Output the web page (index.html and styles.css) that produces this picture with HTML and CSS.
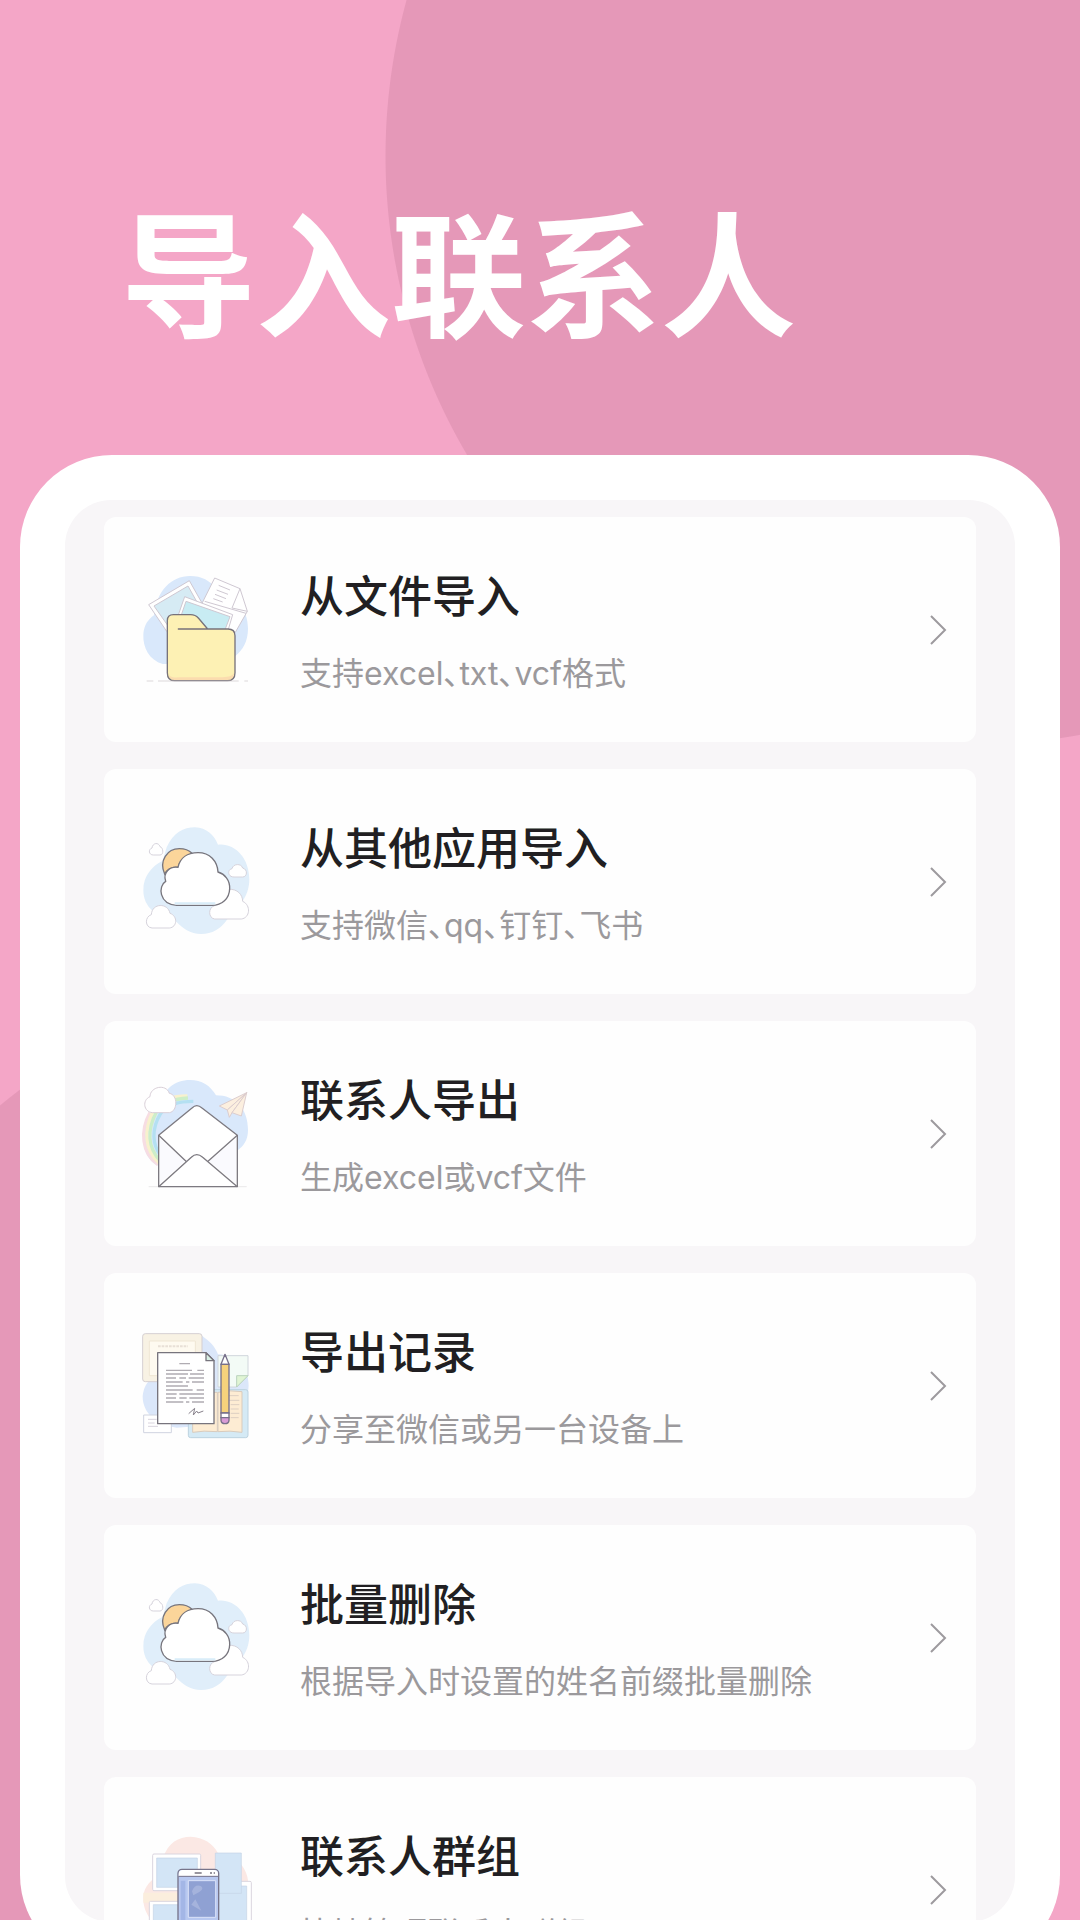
FILE: index.html
```html
<!DOCTYPE html>
<html lang="zh-CN">
<head>
    <meta charset="UTF-8">
    <meta name="viewport" content="width=device-width, initial-scale=1.0">
    <title>导入联系人</title>
    <link rel="stylesheet" href="styles.css">
</head>
<body>
    <!-- Shared icons -->
    <svg class="sprite" aria-hidden="true">
        <symbol id="icon-cloud" viewBox="0 4 420 420">
            <path d="M110 110C130 66 160 50 195 50C230 52 252 72 264 102C312 96 358 140 358 206C358 262 322 290 292 326C272 356 246 370 214 370C180 370 158 352 136 330C80 320 40 290 40 238C40 196 66 166 98 150Z" fill="#e0eefa"/>
            <g fill="#fff" stroke="#d6d3dc" stroke-width="3">
                <path d="M70 133C56 133 54 116 66 112C68 96 86 94 90 108C100 110 102 133 90 133Z"/>
                <path d="M312 199C292 199 292 176 306 174C310 158 334 158 338 172C354 176 352 199 338 199Z"/>
                <path d="M254 325C234 322 234 290 254 285C258 258 270 240 296 236C322 234 338 252 338 272C364 284 360 322 334 325Z"/>
                <path d="M66 352C44 350 44 318 64 312C66 276 114 276 120 308C144 316 142 350 118 352Z"/>
            </g>
            <path d="M104 190C86 150 112 114 148 114C164 114 178 120 186 128L180 140C160 142 148 152 144 170C126 168 112 176 104 190Z" fill="#fbd59a" stroke="#77757d" stroke-width="4"/>
            <path d="M140 284C86 280 84 226 107 212C98 186 120 166 144 170C150 142 172 126 204 126C240 126 262 152 264 184C284 190 300 208 299 234C298 264 276 284 246 284Z" fill="#fff" stroke="#77757d" stroke-width="4"/>
            <path d="M134 278H256" stroke="#d9edf9" stroke-width="7"/>
        </symbol>
        <symbol id="icon-arrow" viewBox="0 0 18 32">
            <path d="M2 2L16 16L2 30" fill="none" stroke="#9d9a9e" stroke-width="2"/>
        </symbol>
    </svg>

    <div class="page">
        <header class="header">
            <h1>导入联系人</h1>
        </header>

        <main class="phone">
            <ul class="menu">
                <li>
                    <a class="card" href="#import-file">
                        <svg class="icon" viewBox="0 -2 420 420" aria-hidden="true">
                            <path d="M98 310C58 298 38 262 40 220C42 194 54 176 72 164C80 90 124 46 180 46C216 46 240 60 258 84C316 100 354 144 354 204C354 242 338 268 316 286L300 310Z" fill="#d9e8fb"/>
                            <g stroke="#cfc8d2" stroke-width="3" stroke-linejoin="round">
                                <path d="M254 52L330 84L352 152L316 215L200 160Z" fill="#fff"/>
                                <path d="M330 84L306 142L352 152M224 122L348 158" fill="none"/>
                                <path d="M266 74L300 88M260 88L294 101M255 101L288 114M250 114L278 124" fill="none"/>
                                <path d="M56 132L178 60L246 180L110 212Z" fill="#fff"/>
                                <path d="M72 136L174 76L230 176L120 204Z" fill="#d6ebf4"/>
                                <path d="M164 108L308 162L288 230L130 206Z" fill="#fff"/>
                                <path d="M168 122L300 168L280 220L142 198Z" fill="#c8ecf3"/>
                            </g>
                            <path d="M112 180C112 168 118 162 130 162H182C192 162 198 164 205 172L233 205H294C308 205 315 213 315 225V336C315 352 306 360 292 360H134C120 360 112 351 112 336Z" fill="#fdf1b4"/>
                            <path d="M116 342C126 354 140 350 160 350H270C292 350 304 348 312 338C312 354 304 358 292 358H134C124 358 118 352 116 342Z" fill="#fbdcae"/>
                            <path d="M112 180C112 168 118 162 130 162H182C192 162 198 164 205 172L233 205H294C308 205 315 213 315 225V336C315 352 306 360 292 360H134C120 360 112 351 112 336ZM145 205H236" fill="none" stroke="#77727a" stroke-width="4" stroke-linecap="round"/>
                            <path d="M50 361H70M84 361H104M104 361H326M343 361H354" stroke="#cbc6c9" stroke-width="2"/>
                        </svg>
                        <span class="text">
                            <span class="name">从文件导入</span>
                            <span class="desc">支持excel、txt、vcf格式</span>
                        </span>
                        <svg class="arrow" aria-hidden="true"><use href="#icon-arrow"/></svg>
                    </a>
                </li>
                <li>
                    <a class="card" href="#import-app">
                        <svg class="icon" aria-hidden="true"><use href="#icon-cloud"/></svg>
                        <span class="text">
                            <span class="name">从其他应用导入</span>
                            <span class="desc">支持微信、qq、钉钉、飞书</span>
                        </span>
                        <svg class="arrow" aria-hidden="true"><use href="#icon-arrow"/></svg>
                    </a>
                </li>
                <li>
                    <a class="card" href="#export">
                        <svg class="icon" viewBox="0 -4 420 420" aria-hidden="true">
                            <path d="M80 300C50 280 38 250 40 214C42 176 60 156 84 140C96 70 134 44 180 44C216 44 240 60 258 90C316 90 354 130 354 194C354 226 340 242 322 256L300 310Z" fill="#d9e8fb"/>
                            <g fill="none" stroke-width="10">
                                <path d="M84 298C34 262 30 196 60 142" stroke="#f7dde3"/>
                                <path d="M88 294C44 254 40 196 70 136C94 100 130 92 172 92" stroke="#f8f1cd"/>
                                <path d="M90 286C54 248 50 196 80 138C104 108 140 100 174 98" stroke="#cdeec8"/>
                                <path d="M92 270C66 238 64 190 92 144C116 116 146 108 190 108" stroke="#b4e0f2"/>
                            </g>
                            <path d="M68 142C40 140 36 104 60 94C60 64 108 54 118 84C144 88 144 138 118 142Z" fill="#fff" stroke="#d9cfd8" stroke-width="3"/>
                            <g fill="#fcefdf" stroke="#dccdce" stroke-width="3" stroke-linejoin="round">
                                <path d="M350 82L268 122L292 134Z"/>
                                <path d="M350 82L292 134L298 156L306 142Z"/>
                                <path d="M350 82L306 142L334 152Z"/>
                            </g>
                            <path d="M56 364H350" stroke="#e0dcde" stroke-width="2"/>
                            <path d="M86 210L186 128Q200 114 216 128L322 210V364H86Z" fill="#fff" stroke="#7d7a81" stroke-width="4" stroke-linejoin="round"/>
                            <path d="M90 220L164 288L90 354ZM318 220L238 288L318 354Z" fill="#fafafe"/>
                            <path d="M86 210L168 288M322 210L234 288M86 364L184 276Q200 260 218 276L322 364" fill="none" stroke="#7d7a81" stroke-width="4"/>
                        </svg>
                        <span class="text">
                            <span class="name">联系人导出</span>
                            <span class="desc">生成excel或vcf文件</span>
                        </span>
                        <svg class="arrow" aria-hidden="true"><use href="#icon-arrow"/></svg>
                    </a>
                </li>
                <li>
                    <a class="card" href="#history">
                        <svg class="icon" viewBox="0 -13 420 420" aria-hidden="true">
                            <path d="M216 46C240 64 254 76 264 102C322 106 356 140 356 196C354 250 330 290 300 310L140 322C80 314 38 280 38 228C40 206 48 190 60 180Z" fill="#dbe7fa"/>
                            <rect x="38" y="40" width="178" height="144" rx="8" fill="#f8f2e4" stroke="#d5cfd2" stroke-width="3"/>
                            <path d="M58 62H196V166H58Z" fill="#fefaf0" stroke="#efe6d4" stroke-width="3"/>
                            <path d="M84 78H174" stroke="#e8e0d6" stroke-width="6" stroke-dasharray="8 3"/>
                            <path d="M264 106H354V166L320 200H264Z" fill="#f3fbf6" stroke="#d0d6dc" stroke-width="3"/>
                            <path d="M354 166H320V200Z" fill="#e0f5d4" stroke="#b9d2bd" stroke-width="3"/>
                            <path d="M41 284H124V337H41Z" fill="#fff" stroke="#d0d4e0" stroke-width="3"/>
                            <path d="M54 297H80M54 308H74M54 318H84" stroke="#d9d4de" stroke-width="3"/>
                            <rect x="175" y="208" width="179" height="144" rx="7" fill="#d5eaf5" stroke="#bcd2df" stroke-width="3"/>
                            <path d="M188 216H262V334Q220 330 188 336ZM264 216Q300 208 336 214V336Q300 330 264 334Z" fill="#fdecd3" stroke="#d8cbbd" stroke-width="3"/>
                            <path d="M296 226H326M296 240H328M302 253H328M302 266H326M302 279H328M302 292H326" stroke="#ddcfc2" stroke-width="3"/>
                            <path d="M83 97H228L252 121V310H83Z" fill="#fff" stroke="#77747d" stroke-width="4" stroke-linejoin="round"/>
                            <path d="M228 97V121H252Z" fill="#d9f0e5" stroke="#77747d" stroke-width="4" stroke-linejoin="round"/>
                            <path d="M148 130H180M108 150H186M202 150H222M108 161H174M180 161H222M108 173H138M148 173H168M176 173H222M108 185H158M168 185H178M186 185H222M108 197H174M108 209H188M200 209H222M108 221H140M148 221H222M108 233H138M148 233H170M178 233H222M108 245H160M168 245H178M186 245H222" stroke="#b0acb2" stroke-width="4"/>
                            <path d="M176 280L194 264L190 284L200 272L204 278L220 272" fill="none" stroke="#87818b" stroke-width="3"/>
                            <path d="M273 132L285 102L297 132Z" fill="#fff" stroke="#77708a" stroke-width="4" stroke-linejoin="round"/>
                            <path d="M273 132H297V278H273Z" fill="#f6d27c" stroke="#77708a" stroke-width="4"/>
                            <path d="M273 278H297V292H273Z" fill="#fff" stroke="#77708a" stroke-width="4"/>
                            <path d="M273 292H297V300Q296 310 285 310Q274 310 273 300Z" fill="#d99bd6" stroke="#77708a" stroke-width="4"/>
                        </svg>
                        <span class="text">
                            <span class="name">导出记录</span>
                            <span class="desc">分享至微信或另一台设备上</span>
                        </span>
                        <svg class="arrow" aria-hidden="true"><use href="#icon-arrow"/></svg>
                    </a>
                </li>
                <li>
                    <a class="card" href="#delete">
                        <svg class="icon" aria-hidden="true"><use href="#icon-cloud"/></svg>
                        <span class="text">
                            <span class="name">批量删除</span>
                            <span class="desc">根据导入时设置的姓名前缀批量删除</span>
                        </span>
                        <svg class="arrow" aria-hidden="true"><use href="#icon-arrow"/></svg>
                    </a>
                </li>
                <li>
                    <a class="card" href="#groups">
                        <svg class="icon" viewBox="0 -2 420 420" aria-hidden="true">
                            <path d="M100 110C114 66 146 48 182 48C220 50 250 68 264 98C320 104 356 140 356 200C354 260 320 320 240 340H120C60 310 38 270 40 228C42 196 66 176 90 160Z" fill="#fbe8e4"/>
                            <path d="M40 216H150V246H40Z" fill="#fbeedd"/>
                            <g fill="#fff" stroke="#dad5df" stroke-width="3">
                                <rect x="68" y="100" width="144" height="110" rx="4"/>
                                <rect x="58" y="242" width="150" height="110" rx="4"/>
                                <rect x="230" y="182" width="134" height="160" rx="4"/>
                            </g>
                            <g fill="#d3e5f6" stroke="#c6d3e6" stroke-width="2">
                                <path d="M80 112H202V200H80Z"/>
                                <path d="M70 252H196V342H70Z"/>
                                <path d="M240 196H350V326H240Z"/>
                                <path d="M256 97H334V218H256Z"/>
                            </g>
                            <rect x="144" y="146" width="122" height="220" rx="12" fill="#b8c8f0" stroke="#77748a" stroke-width="4"/>
                            <path d="M146 166V160Q146 148 158 148H252Q264 148 264 160V166Z" fill="#fff"/>
                            <path d="M146 167H264" stroke="#77748a" stroke-width="3"/>
                            <path d="M194 157H215M240 157H246M251 157H255" stroke="#99969f" stroke-width="6"/>
                            <path d="M152 180H166V320H152Z" fill="#a3b6e6"/>
                            <path d="M175 180H257V290H175Z" fill="#8fa1d3" stroke="#dbe3f8" stroke-width="3"/>
                            <path d="M186 212Q194 190 212 196Q224 204 208 214L190 224ZM196 236L214 270L184 252Z" fill="#a5b3dc"/>
                        </svg>
                        <span class="text">
                            <span class="name">联系人群组</span>
                            <span class="desc">快捷管理联系人群组</span>
                        </span>
                        <svg class="arrow" aria-hidden="true"><use href="#icon-arrow"/></svg>
                    </a>
                </li>
            </ul>
        </main>
    </div>
</body>
</html>
```
FILE: styles.css
```css
* {
    box-sizing: border-box;
}
body {
    margin: 0;
    font-family: "Noto Sans CJK SC", sans-serif;
    background-color: #f4a6c7;
}
.sprite {
    display: none;
}
.page {
    display: flex;
    flex-direction: column;
    height: 100vh;
    overflow: hidden;
    /* two big darker circles behind the phone */
    background:
        radial-gradient(circle at 974px 156px, #e598b8 588px, transparent 589px),
        radial-gradient(circle at 375px 1559px, #e598b8 588px, transparent 589px),
        #f4a6c7;
}
.header {
    padding: 168px 121px 87px;
}
.header h1 {
    margin: 0;
    font-size: 135px;
    line-height: 200px;
    font-weight: 700;
    color: #fff;
}
.phone {
    flex: 1;
    min-height: 0;
    margin: 0 20px -47px;
    padding: 45px;
    border-radius: 92px;
    background-color: #fff;
}
.menu {
    display: flex;
    flex-direction: column;
    gap: 27px;
    height: 100%;
    margin: 0;
    padding: 17px 39px;
    overflow: hidden;
    list-style: none;
    border-radius: 46px;
    background-color: #f8f6f8;
}
.card {
    display: flex;
    align-items: center;
    height: 225px;
    padding: 0 29px 0 26px;
    border-radius: 12px;
    background-color: #fefefe;
    text-decoration: none;
}
.icon {
    flex: none;
    width: 140px;
    height: 140px;
    margin-right: 30px;
}
.text {
    display: flex;
    flex: 1;
    flex-direction: column;
    gap: 24px;
}
.name {
    font-size: 44px;
    line-height: 64px;
    font-weight: 500;
    color: #211f22;
}
.desc {
    font-family: Inter, "Noto Sans CJK SC", sans-serif;
    font-size: 32px;
    line-height: 48px;
    font-feature-settings: "palt";
    color: #9b999c;
}
.arrow {
    flex: none;
    width: 18px;
    height: 32px;
}
```
